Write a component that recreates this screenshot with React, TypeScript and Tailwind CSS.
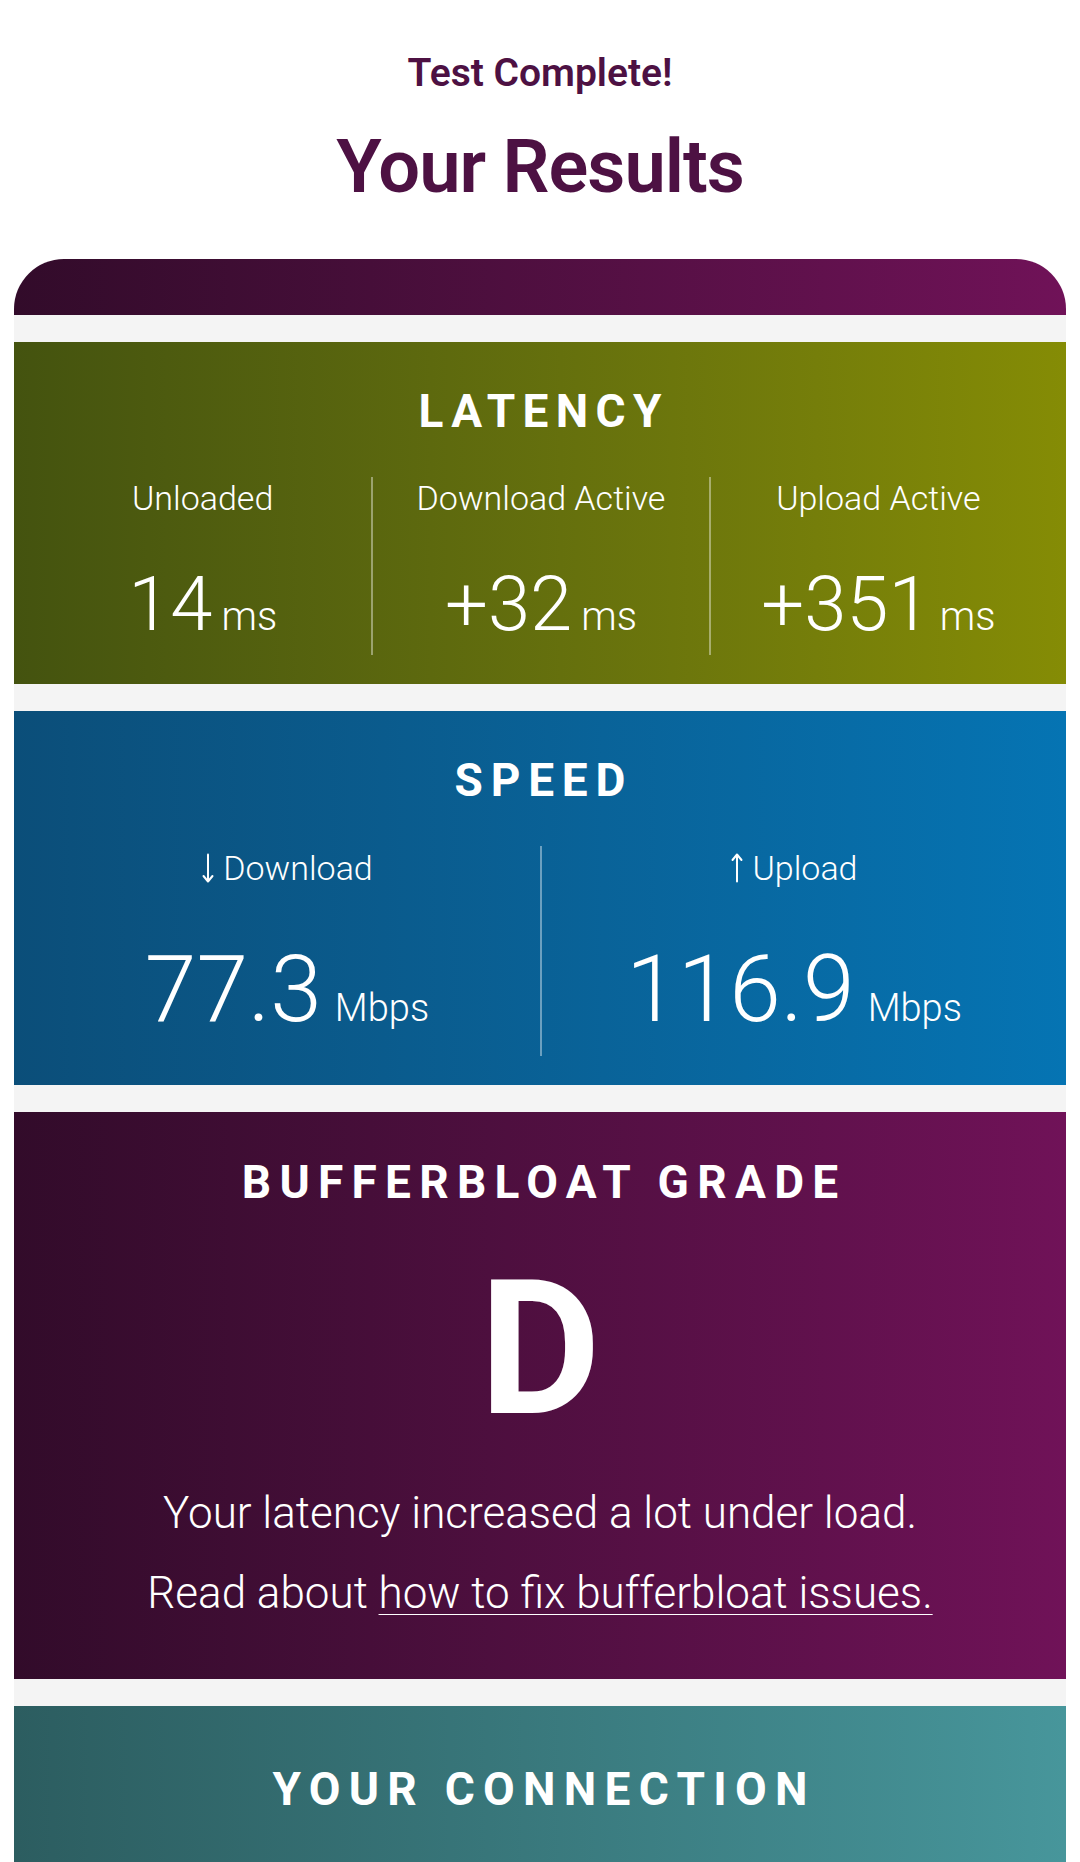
import React from "react";

function ArrowDown() {
  return (
    <svg width="14" height="30" viewBox="0 0 14 30" fill="none" stroke="white" strokeWidth="2" strokeLinecap="round" strokeLinejoin="round">
      <line x1="7" y1="1.5" x2="7" y2="28" />
      <polyline points="2.5,23 7,28.5 11.5,23" />
    </svg>
  );
}

function ArrowUp() {
  return (
    <svg width="14" height="30" viewBox="0 0 14 30" fill="none" stroke="white" strokeWidth="2" strokeLinecap="round" strokeLinejoin="round">
      <line x1="7" y1="2" x2="7" y2="28.5" />
      <polyline points="2.5,7 7,1.5 11.5,7" />
    </svg>
  );
}

function LatencyCol({ label, value, first }: { label: string; value: string; first?: boolean }) {
  return (
    <div className={first ? "flex flex-col items-center pt-[4px]" : "flex flex-col items-center pt-[4px] border-l-2 border-white/40"}>
      <div className="text-[34px] leading-none font-light">{label}</div>
      <div className="mt-[51px] flex items-baseline">
        <span className="text-[76px] leading-none font-light">{value}</span>
        <span className="ml-[9px] text-[40px] leading-none font-light">ms</span>
      </div>
    </div>
  );
}

function SpeedCol({ label, value, up, first }: { label: string; value: string; up?: boolean; first?: boolean }) {
  return (
    <div className={first ? "flex flex-col items-center pt-[5px]" : "flex flex-col items-center pt-[5px] border-l-2 border-white/40"}>
      <div className="flex items-center gap-[8px] text-[34px] leading-none font-light">
        {up ? <ArrowUp /> : <ArrowDown />}
        <span>{label}</span>
      </div>
      <div className="mt-[58px] flex items-baseline">
        <span className="text-[93px] leading-none font-light">{value}</span>
        <span className="ml-[13px] text-[38px] leading-none font-light">Mbps</span>
      </div>
    </div>
  );
}

export default function App() {
  return (
    <div className="w-[1080px] h-[1862px] overflow-hidden bg-white font-[Roboto,'Noto_Sans',sans-serif] text-white">
      <div className="pt-[54px] flex flex-col items-center text-[#4d1143]">
        <div className="text-[39px] leading-none font-semibold">Test Complete!</div>
        <div className="mt-[37px] text-[74px] leading-none font-semibold tracking-[-1px]">Your Results</div>
      </div>

      <div className="mx-[14px] mt-[55px]">
        <div className="h-[56px] rounded-t-[50px] bg-linear-to-r from-[#320b2a] to-[#701258]" />
        <div className="bg-[#f4f4f4] pt-[27px] flex flex-col gap-[27px]">
          {/* Latency */}
          <section className="h-[342px] px-[20px] pt-[46px] bg-linear-to-r from-[#44530f] to-[#858c05]">
            <h3 className="text-center text-[46px] leading-none font-bold tracking-[0.16em] pl-[0.16em]">LATENCY</h3>
            <div className="mt-[43px] grid grid-cols-3 h-[178px]">
              <LatencyCol label="Unloaded" value="14" first />
              <LatencyCol label="Download Active" value="+32" />
              <LatencyCol label="Upload Active" value="+351" />
            </div>
          </section>

          {/* Speed */}
          <section className="h-[374px] px-[20px] pt-[46px] bg-linear-to-r from-[#0b4e79] to-[#0574b3]">
            <h3 className="text-center text-[46px] leading-none font-bold tracking-[0.17em] pl-[0.17em]">SPEED</h3>
            <div className="mt-[43px] grid grid-cols-2 h-[210px]">
              <SpeedCol label="Download" value="77.3" first />
              <SpeedCol label="Upload" value="116.9" up />
            </div>
          </section>

          {/* Bufferbloat */}
          <section className="h-[567px] px-[20px] pt-[47px] flex flex-col items-center bg-linear-to-r from-[#320b2a] to-[#701258]">
            <h3 className="text-center text-[46px] leading-none font-bold tracking-[0.18em] pl-[0.18em]">BUFFERBLOAT GRADE</h3>
            <div className="mt-[51px] text-[187px] leading-none font-bold">D</div>
            <div className="mt-[30px] text-center text-[44px] font-light">
              <div className="leading-[80px]">Your latency increased a lot under load.</div>
              <div className="leading-[80px]">
                Read about{" "}
                <a href="#" className="underline decoration-1 underline-offset-[6px]">how to fix bufferbloat issues.</a>
              </div>
            </div>
          </section>

          {/* Connection */}
          <section className="h-[300px] px-[20px] pt-[60px] bg-linear-to-r from-[#2c5d60] to-[#47969b]">
            <h3 className="text-center text-[46px] leading-none font-bold tracking-[0.18em] pl-[0.18em]">YOUR CONNECTION</h3>
          </section>
        </div>
      </div>
    </div>
  );
}
